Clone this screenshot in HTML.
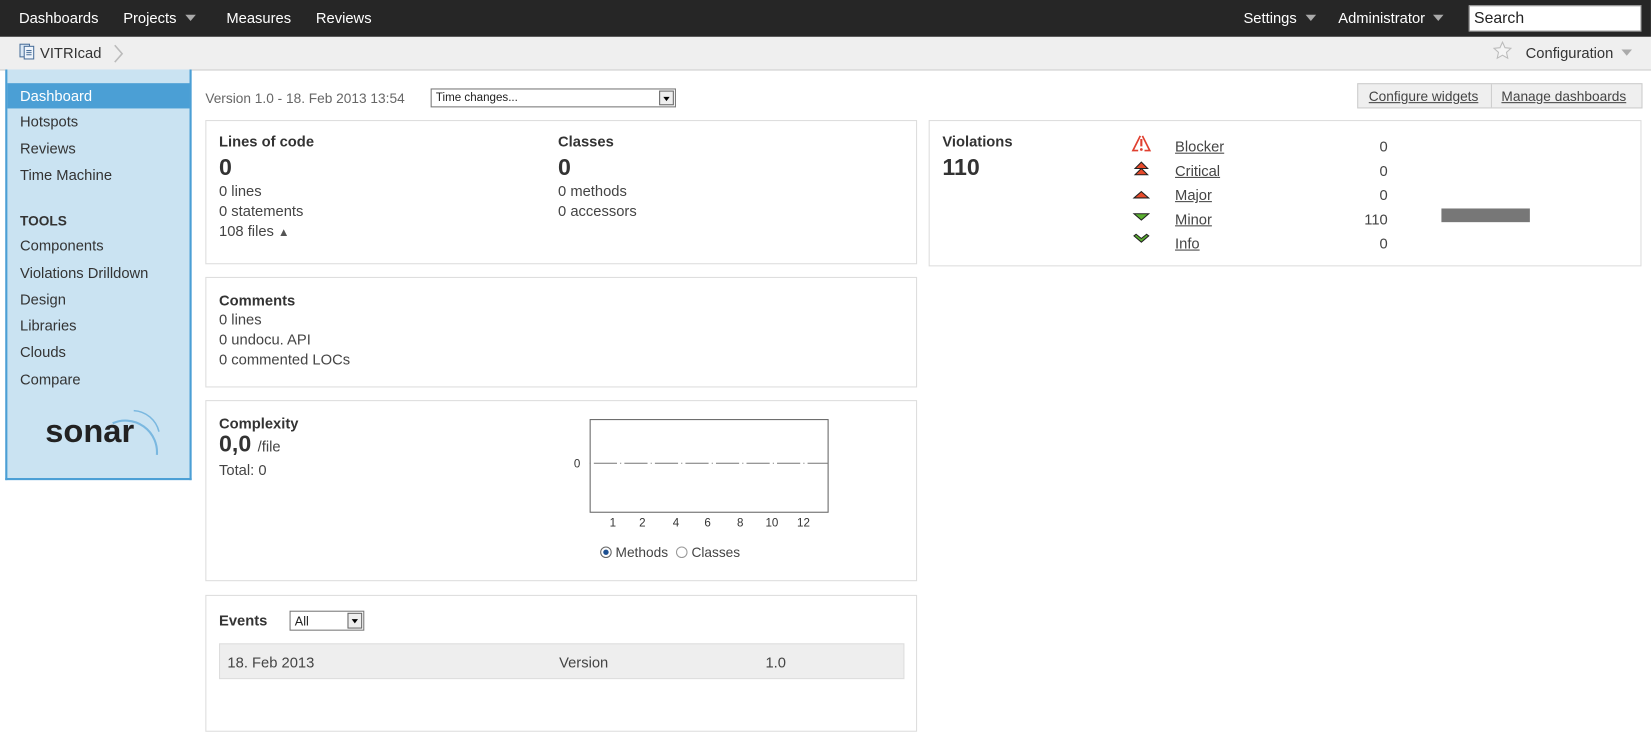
<!DOCTYPE html>
<html><head><meta charset="utf-8"><style>
*{box-sizing:border-box;margin:0;padding:0}
body{width:1651px;height:687px;overflow:hidden;background:#fff;font-family:"Liberation Sans",Arial,sans-serif;font-size:14px;color:#444;position:relative}
#root{position:absolute;left:0;top:0;width:1568px;height:653px;transform:scale(1.0529);transform-origin:0 0}
.a{position:absolute}
#nav{left:0;top:0;width:1568px;height:35px;background:#262626;color:#fff}
#nav span{position:absolute;top:9px;font-size:14px}
.tri{display:inline-block;width:0;height:0;border-left:5px solid transparent;border-right:5px solid transparent;border-top:6px solid #aaa;margin-left:8px;vertical-align:2px}
#bc{left:0;top:35px;width:1568px;height:32px;background:#efefef;border-bottom:1px solid #ccc}
#side{left:5px;top:66px;width:177px;height:390px;background:#cae3f2;border:2px solid #4b9fd5;border-top:none}
#side div{position:absolute;left:12px;font-size:14px;color:#333}
.w{position:absolute;border:1px solid #ddd;background:#fff}
.t{position:absolute;font-weight:bold;color:#333;font-size:14px}
.big{position:absolute;font-weight:bold;font-size:22px;color:#333}
.s{position:absolute;font-size:14px;color:#444;line-height:19px}
u{color:#444}
</style></head><body><div id="root">
<div id="nav" class="a">
<span style="left:18px">Dashboards</span>
<span style="left:117px">Projects<i class="tri"></i></span>
<span style="left:215px">Measures</span>
<span style="left:300px">Reviews</span>
<span style="left:1181px">Settings<i class="tri"></i></span>
<span style="left:1271px">Administrator<i class="tri"></i></span>
<div class="a" style="left:1395px;top:5px;width:164px;height:25px;background:#fff;border:1px solid #999;color:#222;font-size:15px;padding:3px 4px">Search</div>
</div>
<div id="bc" class="a">
<svg class="a" style="left:18px;top:6px" width="16" height="16"><rect x="1" y="1" width="9" height="12" fill="#dbe8f5" stroke="#4a6f9a"/><rect x="5" y="3" width="9" height="12" fill="#eef4fb" stroke="#4a6f9a"/><path d="M7 7h5M7 9h5M7 11h5" stroke="#4a6f9a"/></svg>
<span class="a" style="left:38px;top:7px;color:#333">VITRIcad</span>
<svg class="a" style="left:107px;top:6px" width="12" height="20"><path d="M2 2l7 8-7 8" fill="none" stroke="#bbb" stroke-width="1.5"/></svg>
<svg class="a" style="left:1418px;top:4px" width="18" height="18"><path d="M9 1l2.4 5.3 5.6.6-4.2 3.8 1.2 5.6L9 13.4 4 16.3l1.2-5.6L1 6.9l5.6-.6z" fill="#f4f4f4" stroke="#bbb"/></svg>
<span class="a" style="left:1449px;top:7px;color:#333">Configuration<i class="tri"></i></span>
</div>
<div id="side" class="a">
<div style="left:0;top:13px;width:173px;height:24px;background:#4b9fd5;color:#fff;padding:4px 12px">Dashboard</div>
<div style="top:41px">Hotspots</div>
<div style="top:67px">Reviews</div>
<div style="top:92px">Time Machine</div>
<div style="top:136px;font-weight:bold;font-size:13px">TOOLS</div>
<div style="top:159px">Components</div>
<div style="top:185px">Violations Drilldown</div>
<div style="top:210px">Design</div>
<div style="top:235px">Libraries</div>
<div style="top:260px">Clouds</div>
<div style="top:286px">Compare</div>
<div style="left:36px;top:326px;font-size:31px;font-weight:bold;color:#222">sonar</div>
<svg class="a" style="left:96px;top:318px" width="60" height="60"><path d="M4 18 A 30 30 0 0 1 46 48" fill="none" stroke="#7ab8e0" stroke-width="2"/><path d="M24 6 A 26 26 0 0 1 48 26" fill="none" stroke="#7ab8e0" stroke-width="1.5"/></svg>
</div>
<span class="a" style="left:195px;top:86px;color:#666;font-size:13px">Version 1.0 - 18. Feb 2013 13:54</span>
<div class="a" style="left:409px;top:84px;width:233px;height:18px;border:1px solid #777;font-size:11px;padding:2px 4px;color:#222">Time changes...<div class="a" style="right:1px;top:1px;width:14px;height:14px;border:1px solid #666;background:#eee"><i class="a" style="left:3px;top:5px;border-left:3px solid transparent;border-right:3px solid transparent;border-top:4px solid #000"></i></div></div>
<div class="a" style="left:1289px;top:79px;width:271px;height:24px;border:1px solid #ccc;background:#efefef;font-size:13px">
<u class="a" style="left:10px;top:4px">Configure widgets</u><div class="a" style="left:126px;top:0;width:1px;height:22px;background:#ccc"></div><u class="a" style="left:136px;top:4px">Manage dashboards</u></div>

<div class="w" style="left:195px;top:114px;width:676px;height:137px">
<div class="t" style="left:12px;top:11px">Lines of code</div><div class="big" style="left:12px;top:31px">0</div>
<div class="s" style="left:12px;top:57px">0 lines<br>0 statements<br>108 files <span style="font-size:11px;color:#555">▲</span></div>
<div class="t" style="left:334px;top:11px">Classes</div><div class="big" style="left:334px;top:31px">0</div>
<div class="s" style="left:334px;top:57px">0 methods<br>0 accessors</div>
</div>
<div class="w" style="left:195px;top:263px;width:676px;height:105px">
<div class="t" style="left:12px;top:13px">Comments</div>
<div class="s" style="left:12px;top:30px">0 lines<br>0 undocu. API<br>0 commented LOCs</div>
</div>
<div class="w" style="left:195px;top:380px;width:676px;height:172px">
<div class="t" style="left:12px;top:13px">Complexity</div>
<div class="big" style="left:12px;top:28px">0,0 <span style="font-size:14px;font-weight:normal;color:#444">/file</span></div>
<div class="s" style="left:12px;top:56px">Total: 0</div>
<svg class="a" style="left:340px;top:14px" width="260" height="110"><rect x="24.5" y="3.5" width="226" height="88" fill="#fff" stroke="#666"/><path d="M24 45H250" stroke="#777" stroke-dasharray="1,3,22,3" /><text x="9" y="49" font-size="11" fill="#333" font-family="Liberation Sans">0</text>
<g font-size="11" fill="#333" font-family="Liberation Sans"><text x="43" y="105">1</text><text x="71" y="105">2</text><text x="103" y="105">4</text><text x="133" y="105">6</text><text x="164" y="105">8</text><text x="191" y="105">10</text><text x="221" y="105">12</text></g></svg>
<div class="s" style="left:374px;top:134px;font-size:13px"><span style="display:inline-block;width:11px;height:11px;border:1px solid #666;border-radius:50%;background:radial-gradient(#1d4f91 35%,#fff 45%);vertical-align:-1px"></span> Methods <span style="display:inline-block;width:11px;height:11px;border:1px solid #999;border-radius:50%;vertical-align:-1px;margin-left:4px"></span> Classes</div>
</div>
<div class="w" style="left:195px;top:565px;width:676px;height:130px">
<div class="t" style="left:12px;top:15px">Events</div>
<div class="a" style="left:79px;top:14px;width:71px;height:19px;border:1px solid #777;font-size:12px;padding:2px 4px;color:#222">All<div class="a" style="right:1px;top:1px;width:14px;height:15px;border:1px solid #666;background:#eee"><i class="a" style="left:3px;top:5px;border-left:3px solid transparent;border-right:3px solid transparent;border-top:4px solid #000"></i></div></div>
<div class="a" style="left:12px;top:45px;width:651px;height:34px;background:#eee;border:1px solid #ddd">
<span class="a" style="left:7px;top:9px">18. Feb 2013</span><span class="a" style="left:322px;top:9px">Version</span><span class="a" style="left:518px;top:9px">1.0</span></div>
</div>

<div class="w" style="left:882px;top:114px;width:677px;height:139px">
<div class="t" style="left:12px;top:11px">Violations</div><div class="big" style="left:12px;top:31px">110</div>
<svg class="a" style="left:191px;top:12px" width="20" height="125">
<path d="M9 2L2 16h5M11 2l7 14h-5" fill="none" stroke="#e04030" stroke-width="1.6"/><path d="M10 5v7" stroke="#e04030" stroke-width="2"/><circle cx="10" cy="15" r="1.3" fill="#e04030"/>
<path d="M4 33l6-6 6 6z M4 39l6-6 6 6z" fill="#e84a2a" stroke="#222"/>
<path d="M3 61l7-6 7 6z" fill="#e84a2a" stroke="#222"/>
<path d="M3 76l7 6 7-6z" fill="#5ab030" stroke="#222"/>
<path d="M3 97l7 6 7-6-2-1.5-5 4-5-4z" fill="#5ab030" stroke="#222"/>
</svg>
<div class="s" style="left:233px;top:13px;line-height:23px"><u>Blocker</u><br><u>Critical</u><br><u>Major</u><br><u>Minor</u><br><u>Info</u></div>
<div class="s" style="left:380px;width:55px;text-align:right;top:13px;line-height:23px">0<br>0<br>0<br>110<br>0</div>
<div class="a" style="left:486px;top:83px;width:84px;height:13px;background:#777"></div>
</div>
</div></body></html>
